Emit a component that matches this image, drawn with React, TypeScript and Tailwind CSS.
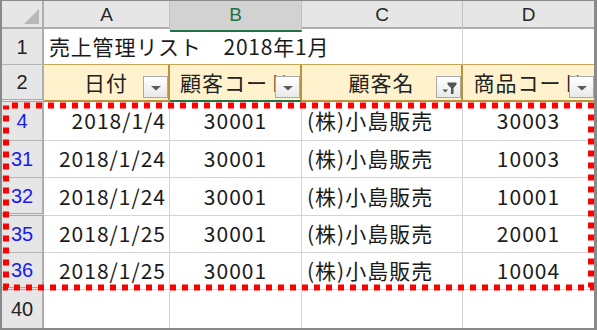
import React from "react";

const JP = { fontFamily: '"Noto Sans CJK JP", "Noto Sans", sans-serif' };
const AR = { fontFamily: '"Liberation Sans", Arial, sans-serif' };

function DropBtn({ filter }: { filter?: boolean }) {
  return (
    <div className="absolute right-0 top-[11px] w-[25px] h-[22px] border border-[#a9a9a9] bg-gradient-to-b from-white to-[#e9e9e9] flex items-center justify-center">
      {filter ? (
        <svg width="20" height="20" viewBox="0 0 20 20">
          <path d="M8.5 5.5 H17.5 V7.5 L14.5 11 V17 H12 V11 L8.5 7.5 Z" fill="#555" />
          <path d="M3.5 12.5 H9 L6.25 15.5 Z" fill="#555" />
        </svg>
      ) : (
        <svg width="20" height="20" viewBox="0 0 20 20">
          <path d="M5 9 H15 L10 13.5 Z" fill="#5a5a5a" />
        </svg>
      )}
    </div>
  );
}

type Row = { n: string; h: string; double: boolean; cells: [string, string, string, string] };

const rows: Row[] = [
  { n: "4", h: "h-[39px]", double: false, cells: ["2018/1/4", "30001", "(株)小島販売", "30003"] },
  { n: "31", h: "h-[37px]", double: false, cells: ["2018/1/24", "30001", "(株)小島販売", "10003"] },
  { n: "32", h: "h-[38px]", double: true, cells: ["2018/1/24", "30001", "(株)小島販売", "10001"] },
  { n: "35", h: "h-[37px]", double: false, cells: ["2018/1/25", "30001", "(株)小島販売", "20001"] },
  { n: "36", h: "h-[37px]", double: true, cells: ["2018/1/25", "30001", "(株)小島販売", "10004"] },
];

export default function App() {
  return (
    <div className="relative w-[597px] h-[330px] bg-[#8a8a8a] pt-px pl-[2px] pr-[3px] pb-[2px]">
      <div className="w-full h-full bg-white flex flex-col overflow-hidden">
        {/* column header */}
        <div className="grid grid-cols-[42px_126px_132px_161px_131px] h-[28px] shrink-0 bg-[#e6e6e6] border-b-2 border-[#adadad]" style={AR}>
          <div className="border-r-2 border-[#adadad] relative">
            <svg width="40" height="26" className="absolute left-0 top-0">
              <path d="M37 8 V23 H22 Z" fill="#b8b8b8" />
            </svg>
          </div>
          <div className="border-r border-[#c3c3c3] flex items-center justify-center text-[19px] text-[#262626]">A</div>
          <div className="border-r border-[#c3c3c3] bg-[#d2d2d2] -mb-[2px] border-b-2 border-b-[#217346] flex items-center justify-center text-[19px] text-[#217346]">B</div>
          <div className="border-r border-[#c3c3c3] flex items-center justify-center text-[19px] text-[#262626]">C</div>
          <div className="flex items-center justify-center text-[19px] text-[#262626]">D</div>
        </div>

        {/* row 1 */}
        <div className="grid grid-cols-[42px_419px_131px] h-[36px] shrink-0">
          <div className="bg-[#e6e6e6] border-r-2 border-r-[#adadad] border-b border-b-[#b4b4b4] flex items-center justify-center text-[20px] text-[#222]" style={AR}>1</div>
          <div className="border-r border-[#d4d4d4] border-b border-b-[#c7a657] flex items-center pl-[5px] text-[21px] tracking-[0.8px] text-[#1a1a1a] whitespace-nowrap" style={JP}>
            売上管理リスト{"\u3000"}2018年1月
          </div>
          <div className="border-b border-b-[#c7a657]" />
        </div>

        {/* row 2 */}
        <div className="grid grid-cols-[42px_126px_132px_161px_131px] h-[37px] shrink-0 tracking-[1px]" style={JP}>
          <div className="bg-[#e6e6e6] border-r-2 border-r-[#adadad] border-b-[3px] border-double border-b-[#a8a8a8] flex items-center justify-center text-[20px] tracking-normal text-[#222]" style={AR}>2</div>
          <div className="relative bg-[#fff2cc] border-r-2 border-[#b8953a] border-b-2 flex items-center justify-center text-[21px] text-[#222] overflow-hidden">
            <span>日付</span>
            <DropBtn />
          </div>
          <div className="relative bg-[#fff2cc] border-r-2 border-r-[#b8953a] border-b-2 border-b-[#217346] flex items-center justify-center text-[21px] text-[#222] overflow-hidden whitespace-nowrap">
            <span>顧客コード</span>
            <DropBtn />
          </div>
          <div className="relative bg-[#fff2cc] border-r-2 border-[#b8953a] border-b-2 flex items-center justify-center text-[21px] text-[#222] overflow-hidden">
            <span>顧客名</span>
            <DropBtn filter />
          </div>
          <div className="relative bg-[#fff2cc] border-b-2 border-[#b8953a] flex items-center justify-center text-[21px] text-[#222] overflow-hidden whitespace-nowrap">
            <span>商品コード</span>
            <DropBtn />
          </div>
        </div>

        {/* data rows */}
        {rows.map((r) => (
          <div key={r.n} className={`grid grid-cols-[42px_126px_132px_161px_131px] ${r.h} shrink-0 text-[21px] tracking-[1px] text-[#1a1a1a]`} style={JP}>
            <div
              className={`bg-[#e6e6e6] border-r-2 border-r-[#adadad] flex items-center justify-center text-[20px] tracking-normal text-[#1a1aee] ${
                r.double ? "border-b-[3px] border-double border-b-[#a8a8a8]" : "border-b border-b-[#b4b4b4]"
              }`}
              style={AR}
            >
              {r.n}
            </div>
            <div className="border-r border-b border-[#d4d4d4] flex items-center justify-end pr-[3px]">{r.cells[0]}</div>
            <div className="border-r border-b border-[#d4d4d4] flex items-center justify-center">{r.cells[1]}</div>
            <div className="border-r border-b border-[#d4d4d4] flex items-center pl-[5px] whitespace-nowrap">{r.cells[2]}</div>
            <div className="border-b border-[#d4d4d4] flex items-center justify-center">{r.cells[3]}</div>
          </div>
        ))}

        {/* row 40 */}
        <div className="grid grid-cols-[42px_126px_132px_161px_131px] h-[38px] shrink-0">
          <div className="bg-[#e6e6e6] border-r-2 border-r-[#adadad] flex items-center justify-center text-[20px] text-[#222]" style={AR}>40</div>
          <div className="border-r border-[#d4d4d4]" />
          <div className="border-r border-[#d4d4d4]" />
          <div className="border-r border-[#d4d4d4]" />
          <div />
        </div>
      </div>

      <svg className="absolute inset-0 pointer-events-none" width="597" height="330">
        <rect x="6" y="105.5" width="585" height="182" fill="none" stroke="#ff0000" strokeWidth="6" strokeDasharray="6 6" strokeDashoffset="-6" />
      </svg>
    </div>
  );
}
